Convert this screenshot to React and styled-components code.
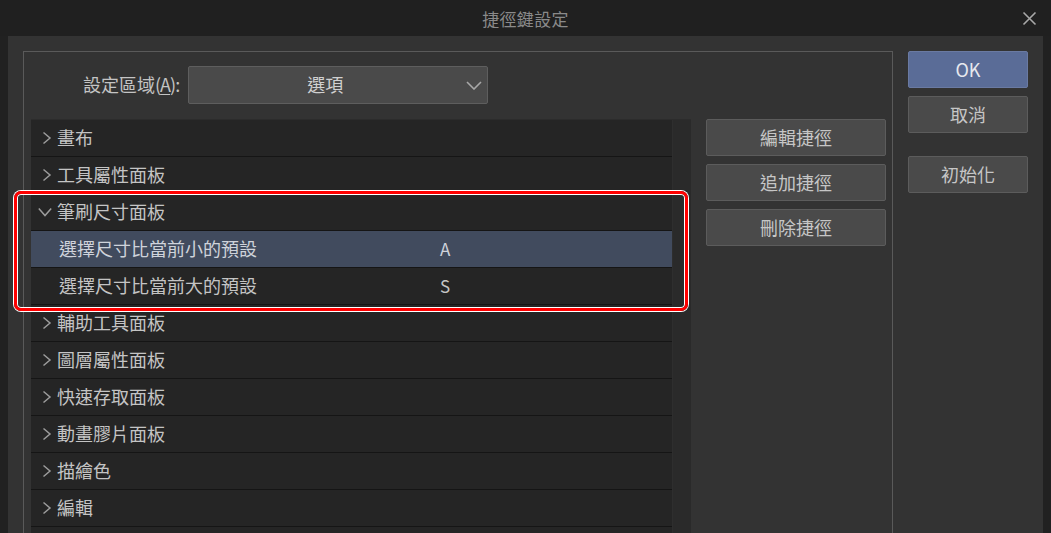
import React from "react";
import styled, { createGlobalStyle } from "styled-components";

const Global = createGlobalStyle`
  html, body { margin: 0; padding: 0; background: #212121; overflow: hidden; }
  body { font-family: "Noto Sans CJK TC", "Noto Sans", sans-serif; }
  * { box-sizing: border-box; }
`;

const Window = styled.div`
  position: relative;
  width: 1051px;
  height: 533px;
  display: flex;
  flex-direction: column;
  background: #212121;
  overflow: hidden;
`;

const TitleBar = styled.div`
  height: 36px;
  flex: none;
  display: grid;
  grid-template-columns: 1fr auto 1fr;
  align-items: center;
  background: #202020;
`;

const Title = styled.div`
  grid-column: 2;
  font-size: 17px;
  color: #8a8a8a;
  letter-spacing: 0.3px;
`;

const CloseBtn = styled.div`
  grid-column: 3;
  justify-self: end;
  margin-right: 14px;
  width: 15px;
  height: 15px;
  display: flex;
  align-items: center;
  justify-content: center;
`;

const Body = styled.div`
  flex: 1;
  margin: 0 8px;
  background: #333333;
  display: flex;
  gap: 15px;
  padding: 15px 15px 0 15px;
  min-height: 0;
`;

const GroupBox = styled.div`
  width: 870px;
  border: 1px solid #5a5a5a;
  border-bottom: none;
  display: flex;
  flex-direction: column;
  padding: 14px 0 0 7px;
`;

const AreaRow = styled.div`
  display: flex;
  align-items: center;
  padding-left: 52px;
  gap: 9px;
`;

const Label = styled.div`
  font-size: 18px;
  color: #c4c4c4;
  padding-bottom: 2px;
  & span { letter-spacing: -1px; }
  & u { text-decoration: underline; text-underline-offset: 2px; }
`;

const Select = styled.div`
  width: 300px;
  height: 38px;
  background: #4a4a4a;
  border: 1px solid #5e5e5e;
  border-radius: 2px;
  display: flex;
  align-items: center;
`;

const SelectText = styled.div`
  flex: 1;
  text-align: center;
  font-size: 18px;
  color: #d0d0d0;
  padding-bottom: 2px;
`;

const SelectArrow = styled.div`
  width: 21px;
  margin-right: 5px;
  display: flex;
  align-items: center;
  justify-content: flex-end;
`;

const MainRow = styled.div`
  display: flex;
  gap: 15px;
  margin-top: 15px;
  flex: 1;
  min-height: 0;
`;

const List = styled.div`
  width: 660px;
  display: flex;
  background: #252525;
  border-top: 1px solid #2c2c2c;
`;

const Rows = styled.div`
  width: 641px;
  display: flex;
  flex-direction: column;
`;

const ScrollTrack = styled.div`
  flex: 1;
  background: #2a2a2a;
  border-left: 1px solid #2e2e2e;
`;

const CatRow = styled.div`
  height: 37px;
  flex: none;
  display: flex;
  align-items: center;
  padding: 0 0 2px 7px;
  gap: 5px;
  border-bottom: 1px solid #151515;
  font-size: 18px;
  color: #c4c4c4;
`;

const Chevron = styled.svg`
  width: 14px;
  height: 14px;
  flex: none;
  margin-top: 2px;
`;

const SubRow = styled.div`
  height: 37px;
  flex: none;
  display: grid;
  grid-template-columns: 381px 1fr;
  align-items: center;
  padding: 0 0 2px 28px;
  border-bottom: 1px solid #151515;
  font-size: 18px;
  color: ${(p) => (p.$selected ? "#cfd3db" : "#c4c4c4")};
  background: ${(p) => (p.$selected ? "#414b5e" : "transparent")};
`;

const Key = styled.div`
  font-size: 17px;
`;

const ActionCol = styled.div`
  width: 180px;
  display: flex;
  flex-direction: column;
  gap: 8px;
`;

const Button = styled.div`
  height: 37px;
  display: flex;
  align-items: center;
  justify-content: center;
  padding-bottom: 2px;
  background: ${(p) => (p.$primary ? "#5a6c97" : "#4a4a4a")};
  border: 1px solid ${(p) => (p.$primary ? "#6a7aa2" : "#5c5c5c")};
  border-radius: 2px;
  font-size: 18px;
  color: ${(p) => (p.$primary ? "#e6e8ee" : "#c6c6c6")};
  margin-top: ${(p) => p.$gapTop || 0}px;
`;

const SideCol = styled.div`
  width: 120px;
  display: flex;
  flex-direction: column;
  gap: 8px;
`;

/* annotation drawn over the screenshot */
const Highlight = styled.div`
  position: absolute;
  left: 14px;
  top: 191px;
  width: 674px;
  height: 120px;
  border: 3px solid #ff0000;
  border-radius: 7px;
  box-shadow: 0 0 0 1px #ffffff, inset 0 0 0 1px #ffffff;
  pointer-events: none;
`;

const Right = () => (
  <Chevron viewBox="0 0 14 14">
    <polyline points="5.5,1.5 12,7 5.5,12.5" fill="none" stroke="#9c9c9c" strokeWidth="1.5" />
  </Chevron>
);

const Down = () => (
  <Chevron viewBox="0 0 14 14">
    <polyline points="0.8,3.5 7,10.5 13.2,3.5" fill="none" stroke="#9c9c9c" strokeWidth="1.5" />
  </Chevron>
);

const before = ["畫布", "工具屬性面板"];
const after = ["輔助工具面板", "圖層屬性面板", "快速存取面板", "動畫膠片面板", "描繪色", "編輯"];

export default function App() {
  return (
    <>
      <Global />
      <Window>
        <TitleBar>
          <Title>捷徑鍵設定</Title>
          <CloseBtn>
            <svg width="15" height="15" viewBox="0 0 15 15">
              <path d="M1.5 1.5 L13.5 13.5 M13.5 1.5 L1.5 13.5" stroke="#a8a8a8" strokeWidth="1.6" fill="none" />
            </svg>
          </CloseBtn>
        </TitleBar>
        <Body>
          <GroupBox>
            <AreaRow>
              <Label>設定區域<span>(<u>A</u>):</span></Label>
              <Select>
                <SelectText>選項</SelectText>
                <SelectArrow>
                  <svg width="16" height="9" viewBox="0 0 16 9">
                    <polyline points="1,1 8,8 15,1" fill="none" stroke="#a8a8a8" strokeWidth="1.6" />
                  </svg>
                </SelectArrow>
              </Select>
            </AreaRow>
            <MainRow>
              <List>
                <Rows>
                  {before.map((t) => (
                    <CatRow key={t}>
                      <Right />
                      {t}
                    </CatRow>
                  ))}
                  <CatRow>
                    <Down />
                    筆刷尺寸面板
                  </CatRow>
                  <SubRow $selected>
                    <span>選擇尺寸比當前小的預設</span>
                    <Key>A</Key>
                  </SubRow>
                  <SubRow>
                    <span>選擇尺寸比當前大的預設</span>
                    <Key>S</Key>
                  </SubRow>
                  {after.map((t) => (
                    <CatRow key={t}>
                      <Right />
                      {t}
                    </CatRow>
                  ))}
                </Rows>
                <ScrollTrack />
              </List>
              <ActionCol>
                <Button>編輯捷徑</Button>
                <Button>追加捷徑</Button>
                <Button>刪除捷徑</Button>
              </ActionCol>
            </MainRow>
          </GroupBox>
          <SideCol>
            <Button $primary>OK</Button>
            <Button>取消</Button>
            <Button $gapTop={15}>初始化</Button>
          </SideCol>
        </Body>
        <Highlight />
      </Window>
    </>
  );
}
